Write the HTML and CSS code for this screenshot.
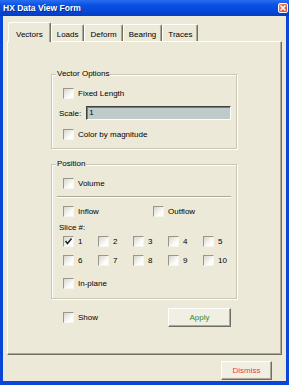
FILE: index.html
```html
<!DOCTYPE html>
<html lang="en">
<head>
    <meta charset="UTF-8">
    <title>HX Data View Form</title>
    <link rel="stylesheet" href="styles.css">
</head>
<body>
    <div class="window">
        <div class="titlebar">
            <span class="title">HX Data View Form</span>
            <span class="close">
                <svg width="8" height="8" viewBox="0 0 8 8"><path d="M1.5 1.5 L6.5 6.5 M6.5 1.5 L1.5 6.5" stroke="#fff" stroke-width="1.4"/></svg>
            </span>
        </div>
        <div class="client">
            <div class="tabs">
                <div class="tab active">Vectors</div>
                <div class="tab">Loads</div>
                <div class="tab">Deform</div>
                <div class="tab">Bearing</div>
                <div class="tab">Traces</div>
            </div>
            <div class="panel">
                <div class="group">
                    <span class="group-title">Vector Options</span>
                    <label class="check"><span class="box"></span>Fixed Length</label>
                    <div class="field">
                        <span>Scale:</span>
                        <span class="input">1</span>
                    </div>
                    <label class="check color-row"><span class="box"></span>Color by magnitude</label>
                </div>

                <div class="group position">
                    <span class="group-title">Position</span>
                    <label class="check"><span class="box"></span>Volume</label>
                    <div class="sep"></div>
                    <div class="flow">
                        <label class="check"><span class="box"></span>Inflow</label>
                        <label class="check"><span class="box"></span>Outflow</label>
                    </div>
                    <div class="slice-label">Slice #:</div>
                    <div class="slices">
                        <label class="check"><span class="box checked"><svg width="9" height="9" viewBox="0 0 9 9"><path d="M1.5 4 L3.5 6.5 L7.5 1.5" fill="none" stroke="#222" stroke-width="1.5"/></svg></span>1</label>
                        <label class="check"><span class="box"></span>2</label>
                        <label class="check"><span class="box"></span>3</label>
                        <label class="check"><span class="box"></span>4</label>
                        <label class="check"><span class="box"></span>5</label>
                        <label class="check"><span class="box"></span>6</label>
                        <label class="check"><span class="box"></span>7</label>
                        <label class="check"><span class="box"></span>8</label>
                        <label class="check"><span class="box"></span>9</label>
                        <label class="check"><span class="box"></span>10</label>
                    </div>
                    <label class="check inplane"><span class="box"></span>In-plane</label>
                </div>

                <div class="actions">
                    <label class="check"><span class="box"></span>Show</label>
                    <button class="btn apply">Apply</button>
                </div>
            </div>
            <div class="footer">
                <button class="btn dismiss">Dismiss</button>
            </div>
        </div>
    </div>
</body>
</html>
```

FILE: styles.css
```css
body {
    margin: 0;
    font-family: "Liberation Sans", Arial, sans-serif;
    font-size: 8px;
    color: #000;
    background: #ece9d8;
}
.window {
    width: 289px;
    height: 385px;
    box-sizing: border-box;
    padding: 0 3px 4px 3px;
    background: #0a46d8;
    display: flex;
    flex-direction: column;
}
.titlebar {
    height: 16px;
    margin: 0 -3px;
    padding: 0 3px;
    display: flex;
    align-items: center;
    justify-content: space-between;
    background: linear-gradient(#2a6ef0, #0a52e6 30%, #0447d6 70%, #053cc0);
}
.title {
    color: #fff;
    font-weight: bold;
    font-size: 8.5px;
    text-shadow: 1px 1px 0 #0a2a8a;
}
.close {
    width: 10px;
    height: 10px;
    box-sizing: border-box;
    border: 1px solid #fff;
    border-radius: 2px;
    background: linear-gradient(135deg, #f08a60, #d9482a);
    display: flex;
    align-items: center;
    justify-content: center;
    margin-right: -2px;
}
.close svg {
    display: block;
}
.client {
    flex: 1;
    background: #ece9d8;
    padding: 6px 4px 1px 4px;
    display: flex;
    flex-direction: column;
}
.tabs {
    height: 19px;
    padding-left: 1px;
    display: flex;
    align-items: flex-end;
    position: relative;
    z-index: 1;
}
.tab {
    height: 17px;
    box-sizing: border-box;
    padding: 4px 5px 0 5px;
    line-height: 11px;
    border-left: 1px solid #fff;
    border-top: 1px solid #fff;
    border-right: 1px solid #716f64;
    box-shadow: inset -1px 0 0 #aca899;
    border-radius: 2px 2px 0 0;
    background: #ece9d8;
}
.tab.active {
    height: 20px;
    padding: 6px 7px 0 7px;
    margin-bottom: -1px;
}
.panel {
    flex: 1;
    border: 1px solid;
    border-color: #fff #716f64 #716f64 #fff;
    box-shadow: inset -1px -1px 0 #aca899;
    padding: 32px 0 0 43px;
}
.group {
    width: 186px;
    box-sizing: border-box;
    position: relative;
    border: 1px solid #c9c6b4;
    box-shadow: 1px 1px 0 #fff, inset 1px 1px 0 #fff;
    padding: 11px 5px 7px 7px;
}
.group-title {
    position: absolute;
    top: -6px;
    left: 4px;
    padding: 0 1px;
    line-height: 10px;
    background: #ece9d8;
}
.check {
    height: 14px;
    display: flex;
    align-items: center;
    gap: 4px;
    margin-left: 4px;
}
.box {
    width: 11px;
    height: 11px;
    box-sizing: border-box;
    border: 1px solid;
    border-color: #9a978a #f6f5f0 #f6f5f0 #9a978a;
    background: linear-gradient(135deg, #d8d6cb, #fdfdfb 70%);
    display: flex;
    align-items: center;
    justify-content: center;
}
.box svg {
    display: block;
}
.field {
    margin-top: 6px;
    height: 14px;
    display: flex;
    align-items: center;
    gap: 5px;
}
.input {
    flex: 1;
    height: 14px;
    box-sizing: border-box;
    border: 1px solid;
    border-color: #404040 #fff #fff #404040;
    box-shadow: inset 1px 1px 0 #7a7a7a;
    background: #bfcbcb;
    padding-left: 2px;
    line-height: 12px;
}
.color-row {
    margin-top: 7px;
}
.position {
    margin-top: 15px;
    padding-bottom: 8px;
}
.sep {
    height: 1px;
    margin: 6px 0 0 -2px;
    background: #aca899;
    border-bottom: 1px solid #fff;
}
.flow {
    margin-top: 6px;
    display: grid;
    grid-template-columns: 90px auto;
}
.slice-label {
    margin-top: 5px;
    line-height: 10px;
}
.slices {
    margin: 1px 0 0 4px;
    display: grid;
    grid-template-columns: repeat(5, 35px);
    row-gap: 5px;
}
.slices .check {
    margin-left: 0;
}
.inplane {
    margin-top: 9px;
}
.actions {
    width: 186px;
    box-sizing: border-box;
    margin-top: 9px;
    padding: 0 6px 0 8px;
    display: flex;
    align-items: center;
    justify-content: space-between;
}
.btn {
    height: 19px;
    box-sizing: border-box;
    border: 1px solid;
    border-color: #fff #716f64 #716f64 #fff;
    box-shadow: inset -1px -1px 0 #aca899;
    background: #f1efe4;
    font-family: "Liberation Sans", Arial, sans-serif;
    font-size: 8px;
    padding: 0;
}
.apply {
    width: 63px;
    color: #2f8a2f;
}
.footer {
    margin-top: 6px;
    display: flex;
    justify-content: flex-end;
    padding-right: 10px;
}
.dismiss {
    width: 51px;
    color: #f0383b;
}
```
